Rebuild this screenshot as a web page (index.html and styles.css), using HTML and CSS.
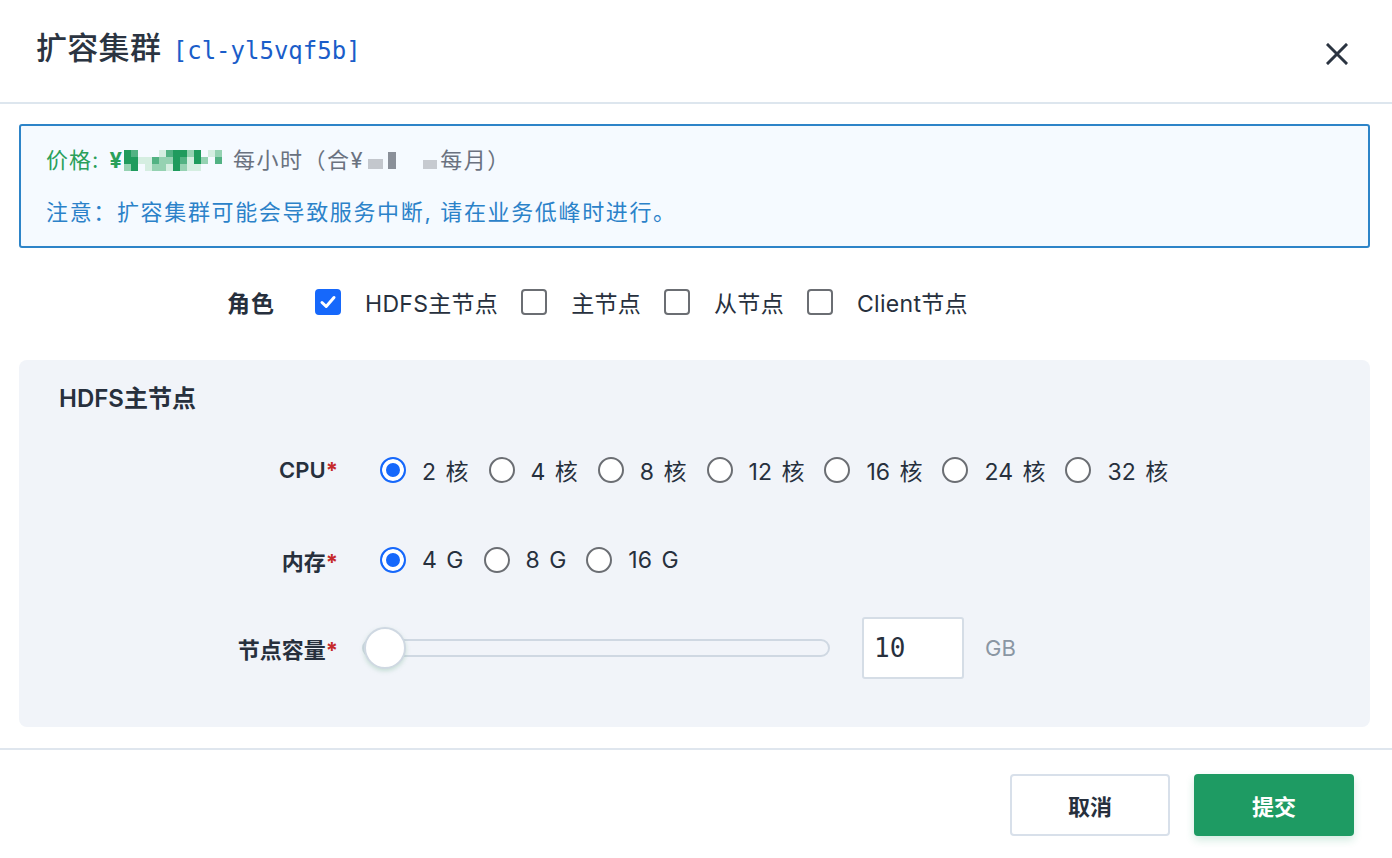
FILE: index.html
```html
<!DOCTYPE html>
<html lang="zh-CN">
<head>
<meta charset="utf-8">
<title>扩容集群</title>
<link rel="stylesheet" href="styles.css">
</head>
<body>
<div class="dialog">
  <header class="dlg-head">
    <h1 class="title">扩容集群 <span class="cid">[cl-yl5vqf5b]</span></h1>
    <button class="close" type="button" aria-label="关闭">
      <svg width="22" height="22" viewBox="0 0 22 22"><path d="M2 2 L20 20 M20 2 L2 20" stroke="#2b3441" stroke-width="3" stroke-linecap="square"/></svg>
    </button>
  </header>

  <div class="dlg-body">
    <div class="alert">
      <p class="price">
        <span class="green">价格: <b>¥</b></span><span class="mosaic m-green"><i class="a"></i><i class="b"></i><i class="e"></i><i class="e"></i><i class="e"></i><i class="d"></i><i class="b"></i><i class="a"></i><i class="a"></i><i class="c"></i><i class="a"></i><i class="e"></i><i class="d"></i><i class="c"></i><i class="a"></i><i class="a"></i><i class="d"></i><i class="d"></i><i class="b"></i><i class="c"></i><i class="c"></i><i class="a"></i><i class="b"></i><i class="d"></i><i class="a"></i><i class="c"></i><i class="e"></i><i class="b"></i><i class="c"></i><i class="a"></i><i class="e"></i><i class="d"></i><i class="c"></i><i class="c"></i><i class="d"></i><i class="a"></i><i class="c"></i><i class="d"></i><i class="d"></i><i class="e"></i><i class="e"></i><i class="e"></i></span>
        <span class="muted">每小时（合¥</span><span class="mosaic2"><i class="g1"></i><i class="g2"></i><i class="g0"></i><i class="g3"></i></span><span class="muted">每月）</span>
      </p>
      <p class="note">注意：扩容集群可能会导致服务中断, 请在业务低峰时进行。</p>
    </div>

    <div class="role-row">
      <span class="role-label">角色</span>
      <div class="checks">
        <label class="check"><span class="box on"><svg width="18" height="18" viewBox="0 0 18 18"><path d="M3 9.5 L7.2 13.5 L15 4.5" fill="none" stroke="#fff" stroke-width="3" stroke-linecap="round" stroke-linejoin="round"/></svg></span>HDFS主节点</label>
        <label class="check"><span class="box"></span>主节点</label>
        <label class="check"><span class="box"></span>从节点</label>
        <label class="check"><span class="box"></span>Client节点</label>
      </div>
    </div>

    <section class="panel">
      <h2 class="panel-title">HDFS主节点</h2>
      <div class="field">
        <span class="flabel">CPU<em>*</em></span>
        <div class="radios">
          <label class="radio"><span class="dot on"></span>2 核</label>
          <label class="radio"><span class="dot"></span>4 核</label>
          <label class="radio"><span class="dot"></span>8 核</label>
          <label class="radio"><span class="dot"></span>12 核</label>
          <label class="radio"><span class="dot"></span>16 核</label>
          <label class="radio"><span class="dot"></span>24 核</label>
          <label class="radio"><span class="dot"></span>32 核</label>
        </div>
      </div>
      <div class="field field-mem">
        <span class="flabel">内存<em>*</em></span>
        <div class="radios">
          <label class="radio"><span class="dot on"></span>4 G</label>
          <label class="radio"><span class="dot"></span>8 G</label>
          <label class="radio"><span class="dot"></span>16 G</label>
        </div>
      </div>
      <div class="field">
        <span class="flabel">节点容量<em>*</em></span>
        <div class="slider-wrap">
          <div class="slider"><span class="thumb"></span></div>
          <div class="num">10</div>
          <span class="unit">GB</span>
        </div>
      </div>
    </section>
  </div>

  <footer class="dlg-foot">
    <button class="btn cancel" type="button">取消</button>
    <button class="btn submit" type="button">提交</button>
  </footer>
</div>
</body>
</html>
```

FILE: styles.css
```css
* { box-sizing: border-box; }
html, body { margin: 0; padding: 0; }
body {
  width: 1392px;
  height: 858px;
  background: #fff;
  color: #27303d;
  font-family: "Inter", "Noto Sans CJK SC", sans-serif;
  overflow: hidden;
}
.dialog { display: flex; flex-direction: column; height: 858px; }

.dlg-head {
  height: 104px;
  border-bottom: 2px solid #dde6ee;
  display: flex;
  align-items: flex-start;
  justify-content: space-between;
  padding: 0 44px 0 36px;
}
.title {
  margin: 28px 0 0;
  font-size: 31px;
  line-height: 40px;
  font-weight: 500;
  color: #2b3441;
  letter-spacing: 0.3px;
}
.cid {
  font-family: "DejaVu Sans Mono", monospace;
  font-size: 24px;
  font-weight: 400;
  color: #1a5dc9;
  letter-spacing: 0;
  margin-left: 3px;
}
.close {
  margin-top: 43px;
  padding: 0;
  border: 0;
  background: none;
  width: 22px;
  height: 22px;
  display: block;
}
.close svg { display: block; }

.dlg-body { padding: 20px 22px 0 19px; }

.alert {
  border: 2px solid #2d84c8;
  border-radius: 3px;
  background: #f5faff;
  padding: 18px 25px 17px;
  height: 124px;
}
.alert p { margin: 0; font-size: 22px; line-height: 32px; }
.alert .note { margin-top: 20px; color: #2b82c9; font-size: 22px; letter-spacing: 1.65px; }
.price { display: flex; align-items: center; white-space: nowrap; }
.green { color: #2aa05a; letter-spacing: 1px; }
.green b { font-weight: 700; margin-left: 3px; letter-spacing: 0; }
.muted { color: #6a7280; letter-spacing: 1.5px; }
.mosaic {
  display: inline-grid;
  grid-template-columns: repeat(14, 7px);
  grid-template-rows: repeat(3, 7px);
  margin: 0 11px 0 2px;
}
.mosaic i { display: block; }
.mosaic .a { background: #1f9b5d; }
.mosaic .b { background: #52b283; }
.mosaic .c { background: #95d2b2; }
.mosaic .d { background: #d5eee1; }
.mosaic .e { background: transparent; }
.mosaic2 { display: inline-flex; align-items: flex-end; height: 18px; margin: 0 3px 0 4px; }
.mosaic2 i { display: block; }
.mosaic2 .g1 { width: 15px; height: 10px; background: #c3c7cd; margin-right: 5px; }
.mosaic2 .g2 { width: 8px; height: 17px; background: #8a9099; margin-right: 27px; }
.mosaic2 .g0 { width: 0; }
.mosaic2 .g3 { width: 14px; height: 9px; background: #c6cad0; }

.role-row {
  display: flex;
  align-items: center;
  height: 40px;
  margin-top: 34px;
  font-size: 23px;
}
.role-label { width: 256px; text-align: right; font-weight: 700; margin-right: 40px; letter-spacing: 1px; }
.checks { display: flex; align-items: center; gap: 23px; }
.check { display: inline-flex; align-items: center; gap: 24px; white-space: nowrap; letter-spacing: 0.3px; }
.box {
  width: 26px; height: 26px;
  border: 2px solid #6b6e73;
  border-radius: 4px;
  background: #fff;
  display: inline-flex; align-items: center; justify-content: center;
}
.box.on { background: #1668fb; border-color: #1668fb; }

.panel {
  margin-top: 38px;
  background: #f1f4f9;
  border-radius: 8px;
  padding: 23px 0 48px 40px;
  height: 367px;
}
.panel-title { margin: 0 0 24px; font-size: 24px; line-height: 32px; font-weight: 600; }
.field { display: flex; align-items: center; height: 62px; margin-left: -40px; }
.field + .field { margin-top: 26px; }
.field.field-mem { margin-top: 28px; }
.flabel { width: 319px; text-align: right; font-size: 22px; font-weight: 600; margin-right: 24px; }
.flabel em { font-style: normal; color: #c62a2a; font-weight: 700; }
.radios { display: flex; align-items: center; gap: 20px; padding-left: 18px; font-size: 23px; word-spacing: 3px; }
.radio { display: inline-flex; align-items: center; gap: 16px; white-space: nowrap; }
.dot {
  width: 26px; height: 26px; border-radius: 50%;
  border: 2px solid #6b6e73; background: #fff;
  display: inline-block;
}
.dot.on { border-color: #1668fb; box-shadow: inset 0 0 0 4px #fff; background: #1668fb; }

.slider-wrap { display: flex; align-items: center; }
.slider {
  position: relative;
  width: 468px; height: 18px;
  border: 2px solid #cfd8e2;
  border-radius: 9px;
  background: #f1f4f9;
}
.thumb {
  position: absolute;
  left: 0; top: 50%;
  width: 42px; height: 42px;
  margin-top: -21px;
  border-radius: 50%;
  background: #fff;
  border: 2px solid #cfd8e2;
  box-shadow: 0 2px 4px rgba(120, 180, 150, 0.35);
}
.num {
  margin-left: 32px;
  width: 102px; height: 62px;
  border: 2px solid #d5dde6;
  border-radius: 3px;
  background: #fff;
  font-family: "DejaVu Sans Mono", monospace;
  font-size: 26px;
  line-height: 58px;
  padding-left: 10px;
  color: #27303d;
}
.unit { margin-left: 21px; font-size: 22px; color: #8a96a3; }

.dlg-foot {
  margin-top: 21px;
  border-top: 2px solid #dfe6ee;
  display: flex;
  justify-content: flex-end;
  gap: 24px;
  padding: 24px 38px 0 0;
}
.btn {
  width: 160px; height: 62px;
  border-radius: 4px;
  font-family: inherit;
  font-size: 22px;
  font-weight: 600;
  cursor: pointer;
}
.cancel { background: #fff; border: 2px solid #d8e0ea; color: #27303d; }
.submit { background: #1e9b63; border: 0; color: #fff; box-shadow: 0 4px 8px rgba(30, 155, 99, 0.2); }
```
